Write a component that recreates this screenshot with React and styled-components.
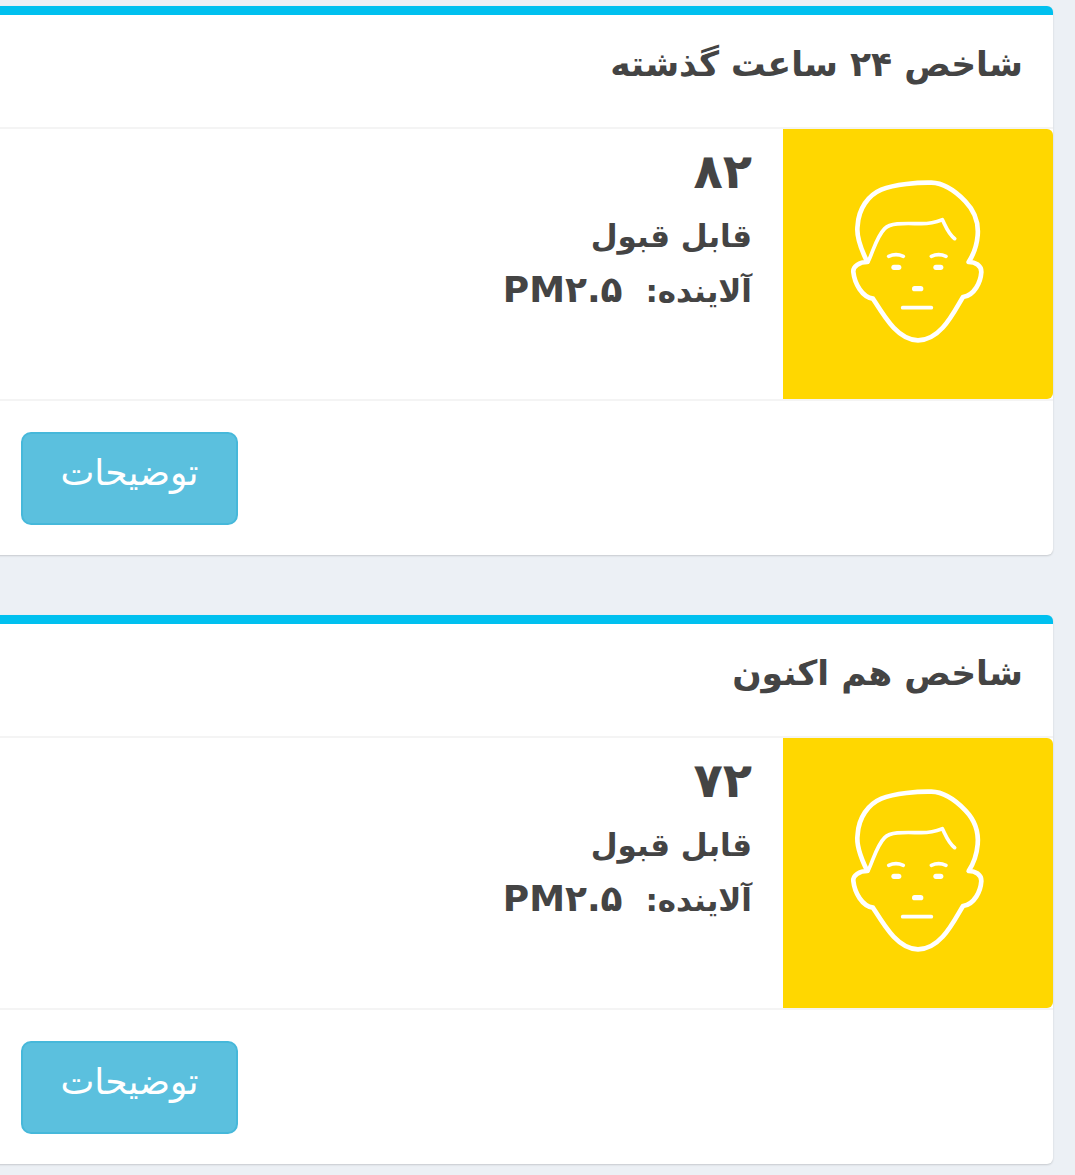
import React from 'react'
import styled, { createGlobalStyle } from 'styled-components'

const GlobalStyle = createGlobalStyle`
  html, body {
    margin: 0;
    padding: 0;
    background: #ecf0f5;
  }
  body {
    font-family: "DejaVu Sans", "Noto Sans", sans-serif;
    overflow-x: hidden;
  }
`

const FaceIcon = () => (
  <svg width="140" height="170" viewBox="220 170 420 510" fill="none" stroke="#fff" strokeLinecap="round" strokeLinejoin="round">
    <path strokeWidth="14" d="M278 425 C258 385 244 345 249 315 C252 265 280 225 320 208 C360 192 430 186 470 187 C510 188 545 215 572 243 C600 272 612 310 609 345 C606 380 595 405 582 425 C602 425 620 435 620 455 C618 485 600 525 565 530 C540 570 500 660 430 660 C370 660 330 590 295 535 C262 530 240 490 236 455 C234 438 255 425 278 425 Z" />
    <path strokeWidth="11" d="M280 425 C295 395 305 350 330 325 C350 305 400 310 440 310 C470 310 490 303 503 298 C512 315 520 340 540 355" />
    <g strokeWidth="11">
      <path d="M342 408 Q364 398 386 408" />
      <path d="M470 408 Q492 398 514 408" />
      <path d="M384 562 L470 562" />
    </g>
    <g strokeWidth="16">
      <path d="M358 441 L372 441" />
      <path d="M484 441 L498 441" />
      <path d="M420 505 L438 505" />
    </g>
  </svg>
)

const Page = styled.div`
  direction: rtl;
  padding: 6px 22px 40px 0;
  margin-left: -10px;
  display: flex;
  flex-direction: column;
  gap: 60px;
`

const Card = styled.section`
  background: #fff;
  border-top: 9px solid #00c0ef;
  border-radius: 6px;
  box-shadow: 0 1px 2px rgba(0, 0, 0, 0.16);
`

const CardHeader = styled.header`
  height: 112px;
  padding: 0 30px;
  border-bottom: 2px solid #f4f4f4;
  display: flex;
  align-items: center;
`

const Title = styled.h3`
  margin: 0 0 14px;
  font-size: 34.5px;
  font-weight: 700;
  color: #444;
`

const InfoBox = styled.div`
  display: flex;
  height: 270px;
`

const IconBox = styled.div`
  width: 270px;
  height: 270px;
  box-sizing: border-box;
  padding-bottom: 4px;
  flex: none;
  background: #ffd700;
  border-radius: 0 6px 6px 0;
  display: flex;
  align-items: center;
  justify-content: center;
`

const InfoText = styled.div`
  padding: 12px 31px 0 0;
  color: #444;
  font-weight: 700;
`

const Value = styled.div`
  font-size: 48px;
  line-height: 60px;
  margin-bottom: 8px;
`

const Line = styled.div`
  font-size: 31px;
  line-height: 54px;
`

const Pollutant = styled.span`
  font-size: 36px;
  margin-right: 12px;
`

const CardFooter = styled.footer`
  height: 156px;
  border-top: 2px solid #f4f4f4;
  padding: 31px 0 0 31px;
  box-sizing: border-box;
  display: flex;
  justify-content: flex-end;
  align-items: flex-start;
`

const Button = styled.button`
  width: 217px;
  height: 93px;
  background: #5bc0de;
  border: 2px solid #46b8da;
  border-radius: 10px;
  color: #fff;
  font-family: inherit;
  font-size: 36px;
  padding: 0 0 12px;
`

const items = [
  { title: 'شاخص ۲۴ ساعت گذشته', value: '۸۲' },
  { title: 'شاخص هم اکنون', value: '۷۲' },
]

const App = () => (
  <>
    <GlobalStyle />
    <Page>
      {items.map((item) => (
        <Card key={item.title}>
          <CardHeader>
            <Title>{item.title}</Title>
          </CardHeader>
          <InfoBox>
            <IconBox>
              <FaceIcon />
            </IconBox>
            <InfoText>
              <Value>{item.value}</Value>
              <Line>قابل قبول</Line>
              <Line>آلاینده: <Pollutant>PM۲.۵</Pollutant></Line>
            </InfoText>
          </InfoBox>
          <CardFooter>
            <Button>توضیحات</Button>
          </CardFooter>
        </Card>
      ))}
    </Page>
  </>
)

export default App
